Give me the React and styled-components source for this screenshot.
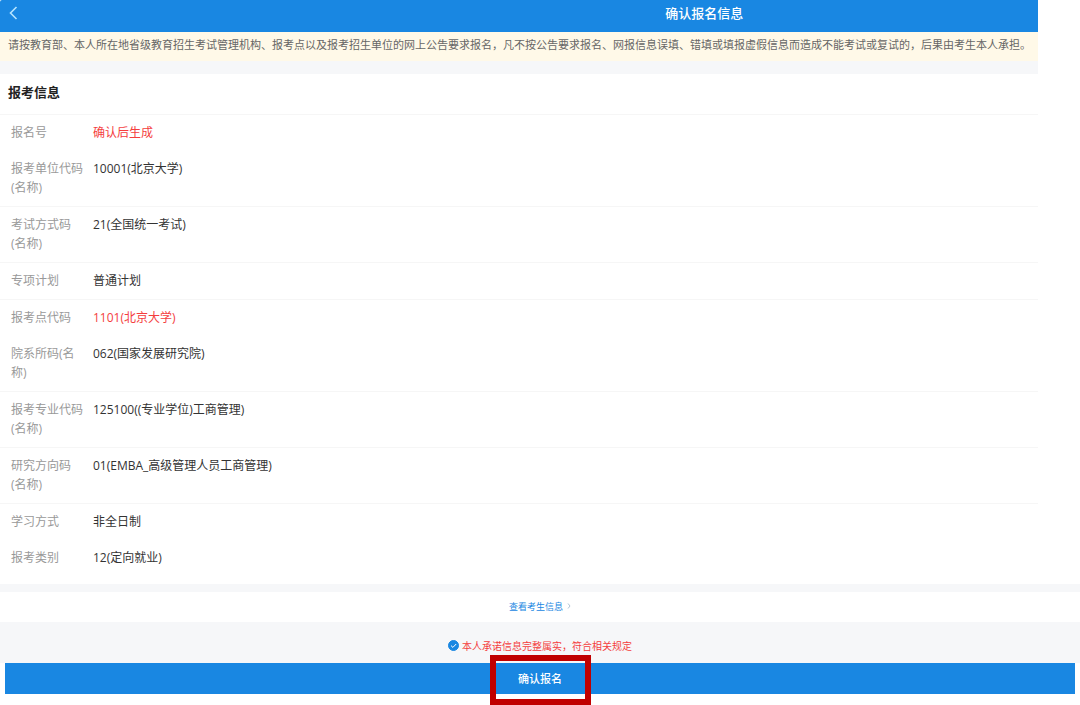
import React, { useState } from "react";
import styled, { createGlobalStyle } from "styled-components";

const GlobalStyle = createGlobalStyle`
  * {
    box-sizing: border-box;
  }

  body {
    margin: 0;
    background-color: #fff;
    color: #333;
    font-family: "Open Sans", "Noto Sans CJK SC", sans-serif;
    font-size: 12px;
  }
`;

const Page = styled.div`
  display: flex;
  flex-direction: column;
`;

const Main = styled.main`
  margin-right: 42px;
`;

const Header = styled.header`
  display: flex;
  align-items: center;
  height: 32px;
  padding-bottom: 6px;
  border-top-left-radius: 2px;
  background-color: #1987e2;
  color: #fff;
`;

const BackButton = styled.button`
  display: flex;
  align-items: center;
  width: 28px;
  height: 26px;
  padding: 0 0 0 8px;
  border: none;
  background: none;
  color: #b5e4ff;
  cursor: pointer;
`;

const Title = styled.h1`
  flex: 1;
  margin: 0;
  padding-left: 33%;
  font-size: 13px;
  font-weight: 500;
  line-height: 20px;
  text-align: center;
`;

const Notice = styled.p`
  margin: 0;
  padding: 5px 4px 8px 8px;
  background-color: #fff9e8;
  color: #666;
  font-size: 11px;
  line-height: 16px;
`;

const Divider = styled.div`
  height: ${({ $size }) => $size}px;
  background-color: #f6f7f9;
`;

const SectionTitle = styled.h2`
  margin: 0;
  padding: 8px 8px 12px;
  border-bottom: 1px solid #f6f6f6;
  font-size: 13px;
  font-weight: 700;
  line-height: 20px;
  color: #222;
`;

const List = styled.dl`
  margin: 0;
  padding-bottom: 8px;
`;

const Row = styled.div`
  display: flex;
  gap: 8px;
  padding: 8px 11px 9px;
  border-bottom: ${({ $line }) => ($line ? "1px solid #f6f6f6" : "none")};
  line-height: 19px;
`;

const Label = styled.dt`
  flex: none;
  width: 74px;
  color: #999;
`;

const Value = styled.dd`
  margin: 0;
  color: ${({ $red }) => ($red ? "#f43e3e" : "#333")};
`;

const LinkBar = styled.div`
  display: flex;
  justify-content: center;
  height: 30px;
  padding-top: 6px;
`;

const DetailLink = styled.a`
  display: flex;
  align-items: center;
  gap: 4px;
  height: 16px;
  color: #1987e2;
  font-size: 9px;
  text-decoration: none;
`;

const Agreement = styled.div`
  display: flex;
  justify-content: center;
  height: 41px;
  padding-top: 15px;
  background-color: #f6f7f9;
`;

const AgreementLabel = styled.label`
  display: flex;
  align-items: center;
  gap: 3px;
  height: 16px;
  color: #f43e3e;
  font-size: 10px;
`;

const CheckWrap = styled.span`
  display: grid;
  width: 11px;
  height: 11px;

  > * {
    grid-area: 1 / 1;
  }

  svg {
    pointer-events: none;
  }
`;

const Check = styled.input`
  appearance: none;
  width: 11px;
  height: 11px;
  margin: 0;
  border: 1px solid #1987e2;
  border-radius: 50%;
  background-color: ${({ checked }) => (checked ? "#1987e2" : "#fff")};
`;

const Footer = styled.footer`
  position: relative;
  padding: 0 5px 11px;
`;

const SubmitButton = styled.button`
  display: block;
  width: 100%;
  height: 31px;
  padding: 0 0 2px;
  border: none;
  background-color: #1987e2;
  color: #fff;
  font-family: inherit;
  font-size: 11px;
  font-weight: 500;
  cursor: pointer;
`;

const Highlight = styled.div`
  position: absolute;
  top: -8px;
  bottom: 0;
  left: 50%;
  width: 101px;
  margin-left: -50px;
  border: 6px solid #c00000;
  pointer-events: none;
`;

const rows = [
  { label: "报名号", value: "确认后生成", red: true },
  { label: "报考单位代码(名称)", value: "10001(北京大学)", line: true },
  { label: "考试方式码(名称)", value: "21(全国统一考试)", line: true },
  { label: "专项计划", value: "普通计划", line: true },
  { label: "报考点代码", value: "1101(北京大学)", red: true },
  { label: "院系所码(名称)", value: "062(国家发展研究院)", line: true },
  { label: "报考专业代码(名称)", value: "125100((专业学位)工商管理)", line: true },
  { label: "研究方向码(名称)", value: "01(EMBA_高级管理人员工商管理)", line: true },
  { label: "学习方式", value: "非全日制" },
  { label: "报考类别", value: "12(定向就业)" },
];

const App = () => {
  const [agreed, setAgreed] = useState(true);

  return (
    <Page lang="zh-CN">
      <GlobalStyle />
      <Main>
        <Header>
          <BackButton type="button" aria-label="返回">
            <svg width="11" height="14" viewBox="0 0 11 14" fill="none">
              <path d="M8.5 1L2.5 7l6 6" stroke="currentColor" strokeWidth="1.6" />
            </svg>
          </BackButton>
          <Title>确认报名信息</Title>
        </Header>
        <Notice>
          请按教育部、本人所在地省级教育招生考试管理机构、报考点以及报考招生单位的网上公告要求报名，凡不按公告要求报名、网报信息误填、错填或填报虚假信息而造成不能考试或复试的，后果由考生本人承担。
        </Notice>
        <Divider $size={13} />
        <SectionTitle>报考信息</SectionTitle>
        <List>
          {rows.map((row) => (
            <Row key={row.label} $line={row.line}>
              <Label>{row.label}</Label>
              <Value $red={row.red}>{row.value}</Value>
            </Row>
          ))}
        </List>
      </Main>
      <Divider $size={8} />
      <LinkBar>
        <DetailLink href="#info">
          查看考生信息
          <svg width="4" height="6" viewBox="0 0 4 6" fill="none">
            <path d="M1 0.5L3 3L1 5.5" stroke="#9ab4cc" strokeWidth="0.8" />
          </svg>
        </DetailLink>
      </LinkBar>
      <Agreement>
        <AgreementLabel>
          <CheckWrap>
            <Check
              type="checkbox"
              checked={agreed}
              onChange={(e) => setAgreed(e.target.checked)}
            />
            <svg width="11" height="11" viewBox="0 0 11 11" fill="none">
              <path d="M3 5.6l1.9 1.8L8.2 4" stroke="#fff" strokeWidth="1" />
            </svg>
          </CheckWrap>
          本人承诺信息完整属实，符合相关规定
        </AgreementLabel>
      </Agreement>
      <Footer>
        <SubmitButton type="submit">确认报名</SubmitButton>
        <Highlight />
      </Footer>
    </Page>
  );
};

export default App;
